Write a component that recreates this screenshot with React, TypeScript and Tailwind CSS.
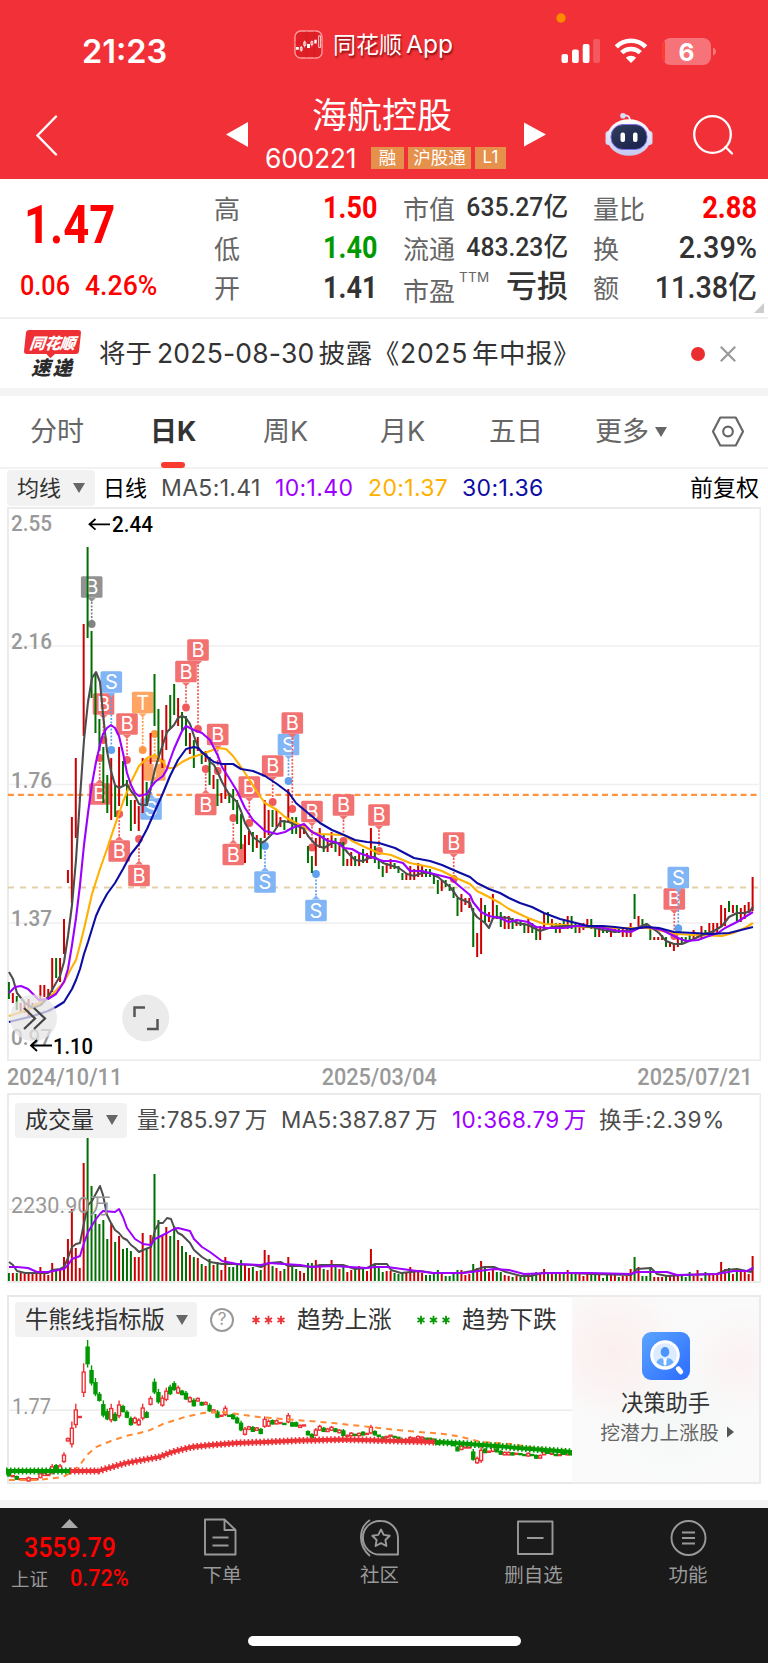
import React from 'react';

type Point = 'B' | 'S' | 'T' | 'N';

// one entry per trading day: direction + high/low position
const daily = `G982-999 R993-1003 G996-1010 R1003-1013 R1003-1013 R999-1016 R1003-1009 R1003-1007 R985-1005 R985-997
R989-997 R958-992 G958-978 R958-982 R919-954 R870-883 R817-903 R758-838 R797-799 R624-736
G547-638 G631-698 G673-733 G719-751 G747-803 G775-813 R758-820 G785-817 R747-806 G761-787
G780-806 G800-831 R800-824 R806-831 R758-813 G782-806 R733-764 G674-726 G709-758 R730-768
R705-750 G695-729 G684-715 R698-726 G712-730 G716-746 R733-754 G740-768 R737-751 G751-764
R751-762 G757-785 R775-789 G779-806 R793-803 R764-799 G793-803 G789-810 G800-824 G814-849
R835-863 R831-845 G832-852 R835-848 G838-859 R800-838 R810-835 G810-827 R810-827 R817-827
G820-830 R789-823 G817-834 G817-834 R827-838 R825-834 G846-863 G856-873 R838-866 R828-848
G835-852 R838-852 R832-848 G838-852 R842-856 G842-866 R859-866 R852-866 G856-866 R853-866
G849-863 R853-863 R828-859 G846-863 G859-869 G866-877 R863-873 R859-869 G863-869 G866-873
G873-880 R873-880 R866-880 R869-880 R863-877 R866-877 G869-877 G869-877 G873-884 G880-894
R880-891 G880-887 G884-891 G887-898 G898-916 R894-912 R898-905 R898-908 G908-947 R933-957
R898-954 G905-922 R912-922 R894-919 G905-919 G912-927 R916-929 R916-929 G918-929 R919-926
G920-926 G923-933 R919-933 G923-933 G926-940 R926-940 R913-929 G912-924 R919-927 G923-933
R923-933 G919-929 R916-929 G916-929 G923-933 R923-933 R923-930 R919-927 G919-929 G926-937
R926-937 G927-933 G927-933 R927-937 R927-933 G927-933 R928-937 R928-937 R923-937 G894-919
R916-926 G919-927 G923-927 G927-940 R937-940 R937-940 R935-940 G937-947 R943-947 R943-951
R937-947 G937-943 G937-943 G935-942 R930-940 R933-938 R926-939 G930-935 R923-935 R923-933
R923-933 R905-927 R908-926 G901-912 R905-913 G905-922 R908-922 R905-919 R902-913 R877-911`
  .split(/\s+/)
  .map((d) => {
    const [high, low] = d.slice(1).split('-').map(Number);
    return { up: d[0] === 'R', high, low };
  });

const volumes = [
  8, 8, 8, 8, 7, 8, 8, 7, 14, 9, 6, 18, 11, 12, 24, 42, 72, 33, 13, 118, 143, 95, 67, 57, 61, 42, 58, 39, 45, 32,
  33, 30, 24, 24, 48, 33, 46, 107, 61, 45, 54, 45, 55, 41, 35, 29, 26, 24, 23, 17, 15, 22, 16, 19, 11, 24, 14, 14,
  17, 21, 17, 13, 14, 10, 11, 31, 26, 15, 13, 10, 12, 24, 15, 12, 10, 8, 18, 18, 21, 14, 12, 11, 21, 14, 12, 15, 9,
  11, 12, 15, 12, 10, 32, 17, 14, 9, 10, 10, 8, 7, 9, 9, 14, 11, 11, 8, 6, 6, 9, 11, 9, 5, 5, 7, 11, 11, 6, 7, 17,
  13, 20, 13, 9, 12, 9, 9, 6, 5, 4, 5, 4, 5, 7, 7, 9, 7, 12, 9, 7, 8, 7, 8, 11, 8, 8, 8, 5, 7, 8, 7, 8, 3, 6, 6, 7,
  4, 5, 5, 12, 24, 14, 5, 5, 14, 4, 4, 4, 6, 5, 5, 7, 7, 4, 9, 5, 11, 3, 9, 6, 6, 6, 19, 12, 13, 7, 13, 10, 10, 7, 25,
];

const averages = [
  {
    color: '#ffb000',
    points:
      '9,1016 25,1011 41,1002 52,995 64,982 72,967 76,960 80,945 84,929 92,894 100,869 107,849 115,825 123,802 131,782 139,766 147,758 155,755 163,762 167,768 174,768 182,762 190,758 202,754 210,751 218,748 226,749 233,756 241,767 249,779 257,792 265,803 277,810 285,817 296,823 304,827 312,832 320,834 344,835 352,841 367,848 379,853 391,855 410,863 430,867 442,871 454,877 470,884 477,891 489,897 500,903 509,909 528,918 544,924 564,925 584,927 607,928 631,928 647,928 662,931 678,934 694,935 722,936 733,933 745,928 753,923',
  },
  {
    color: '#4d4d4d',
    points:
      '9,972 13,979 17,993 25,1003 33,1008 41,1005 48,997 56,983 60,976 64,962 68,936 72,905 76,860 80,798 84,740 88,702 92,678 96,672 100,682 103,714 107,751 111,771 115,785 119,788 123,786 127,784 131,791 135,796 139,804 143,805 147,805 151,787 155,769 159,756 163,744 167,732 174,725 178,718 182,716 186,718 190,724 194,736 198,747 202,753 206,754 210,762 214,765 218,773 222,782 226,789 229,794 237,802 241,811 245,823 253,837 261,843 265,841 273,833 281,821 289,822 304,829 308,836 316,845 324,848 332,843 340,843 348,853 355,860 363,861 371,857 375,857 383,863 399,868 407,874 414,876 422,873 430,873 438,877 450,887 454,892 458,898 470,903 473,912 477,917 485,923 489,928 493,918 497,917 509,918 517,923 528,925 540,931 552,927 564,926 576,926 592,927 603,930 615,932 623,931 631,931 639,927 647,924 651,927 659,933 666,941 674,944 682,944 694,939 702,935 714,931 722,926 729,917 737,913 745,913 750,911 753,907',
  },
  {
    color: '#9d00ff',
    points:
      '9,993 15,987 21,986 28,989 33,994 39,1000 48,999 56,994 64,982 68,969 72,945 76,918 80,885 84,845 88,813 92,784 96,762 100,745 103,734 107,728 111,725 115,728 119,736 123,753 127,773 131,785 135,793 139,796 147,794 151,787 155,782 163,776 167,769 170,760 174,749 178,740 182,731 186,726 194,730 202,733 210,740 218,756 222,767 229,778 237,791 245,808 253,820 265,831 277,834 285,832 292,828 304,824 312,832 320,836 328,841 336,842 344,848 352,849 359,853 371,857 383,861 395,861 403,863 410,871 422,871 434,874 450,878 458,885 470,895 473,902 481,912 489,916 500,918 509,922 517,920 528,922 536,927 548,928 564,928 576,926 592,926 603,928 619,931 631,932 639,928 647,927 662,930 670,934 678,938 686,941 698,940 706,937 718,933 725,928 737,922 745,917 753,912',
  },
  {
    color: '#0d0da3',
    points:
      '9,1022 33,1016 48,1011 56,1007 64,1002 72,989 76,980 80,969 84,954 88,942 96,916 100,907 107,894 115,883 123,869 131,854 139,844 147,829 155,811 163,793 170,776 178,760 186,749 194,747 198,748 206,756 214,762 222,764 233,764 241,769 253,771 265,776 277,784 289,793 296,803 308,813 320,823 332,830 344,835 355,840 367,842 379,843 395,848 414,858 430,861 442,865 458,872 470,877 477,883 489,889 500,893 509,898 520,903 532,907 544,913 560,919 576,923 588,926 603,926 615,927 631,929 647,927 659,928 674,932 694,933 710,934 729,933 745,929 753,927',
  },
];

const volumeAverages = [
  {
    color: '#4d4d4d',
    points:
      '9,1262 13,1265 17,1271 25,1273 37,1273 48,1273 52,1270 60,1269 64,1267 68,1258 72,1247 76,1244 80,1243 84,1223 88,1205 92,1201 100,1186 103,1195 107,1215 111,1223 115,1230 119,1233 123,1238 127,1240 131,1245 135,1248 139,1252 143,1250 151,1247 155,1230 159,1223 163,1223 167,1218 171,1219 174,1227 178,1233 182,1235 190,1243 194,1250 202,1257 210,1262 222,1264 233,1264 253,1265 261,1267 269,1263 281,1262 288,1266 300,1266 312,1267 320,1265 343,1265 355,1269 367,1268 375,1264 387,1264 391,1270 401,1273 421,1271 432,1273 461,1273 472,1271 484,1267 494,1267 506,1272 521,1276 531,1276 542,1273 571,1273 591,1274 631,1275 637,1269 651,1268 657,1274 667,1276 684,1275 717,1274 726,1270 737,1269 751,1272 753,1267',
  },
  {
    color: '#9d00ff',
    points:
      '9,1267 17,1267 28,1268 37,1272 48,1272 64,1269 68,1265 72,1259 80,1256 84,1243 88,1232 96,1219 100,1214 103,1211 115,1212 119,1209 123,1217 127,1228 135,1239 143,1244 151,1245 155,1239 167,1233 174,1229 178,1228 190,1231 194,1239 202,1247 210,1252 222,1261 237,1264 261,1265 269,1263 283,1264 300,1265 312,1267 333,1266 367,1268 375,1267 387,1267 417,1271 434,1273 464,1273 494,1269 509,1270 524,1274 551,1273 591,1273 631,1274 637,1272 667,1272 677,1275 717,1274 734,1271 747,1271 753,1268',
  },
];

const markColors = { B: '#f26d6d', S: '#7db3f5', T: '#ffa25c', N: '#8f8f8f' };
const dotColors = { B: '#f05555', S: '#5c9ff0', T: '#ff9440', N: '#808080' };

// kind, x, label y, dot y
const marks: [Point, number, number, number][] = [
  ['N', 91.7, 587, 624],
  ['B', 103.5, 704, 740],
  ['S', 111.3, 682, 750],
  ['B', 99.7, 794, 758],
  ['B', 127, 724, 760],
  ['T', 142.7, 702.5, 750],
  ['S', 151, 809, 772],
  ['T', 154.7, 770, 734],
  ['B', 119.2, 851, 814],
  ['B', 139, 875.5, 839],
  ['B', 186, 671.5, 707.5],
  ['B', 198, 650, 729],
  ['B', 217.7, 734.5, 771],
  ['B', 205.7, 804.5, 769],
  ['B', 233.3, 854.5, 818],
  ['B', 249.3, 787, 823],
  ['S', 265, 882, 846],
  ['B', 272.7, 766, 802],
  ['S', 288.5, 744.5, 781],
  ['B', 292.3, 723, 809],
  ['B', 312, 811.5, 847.5],
  ['S', 316, 910.5, 874],
  ['B', 343.5, 805, 841],
  ['B', 379, 815, 851],
  ['B', 453.7, 843, 879],
  ['B', 674.3, 899, 936],
  ['S', 678.3, 877.5, 928.5],
];

const barX = (i: number) => 8.9 + i * 3.935;

const cjk = "font-['Noto_Sans_CJK_SC',sans-serif]";
const latin = "font-['Inter','Noto_Sans_CJK_SC',sans-serif]";
const digits = "font-['Roboto','Noto_Sans_CJK_SC',sans-serif]";

function Caret({ className = '' }: { className?: string }) {
  return (
    <svg viewBox="0 0 12 10" className={`h-[10px] w-[12px] shrink-0 fill-[#666] ${className}`}>
      <path d="M0 0h12L6 10z" />
    </svg>
  );
}

function StatusBar() {
  return (
    <div className="flex h-[92px] items-start">
      <div className={`ml-[82px] mt-[32px] w-[212px] text-[32.500px] leading-[40px] font-semibold ${latin}`}>21:23</div>
      <svg viewBox="0 0 30 30" className="mt-[30px] size-[29px]">
        <rect x="1" y="1" width="28" height="28" rx="6" fill="#e01f26" stroke="#ff9a9c" strokeWidth="1.4" />
        <path d="M1 13h28M13 1v28M21 1v28" stroke="#c91a20" strokeWidth=".5" />
        <path d="M2 17.500h3v3H2zM13.500 14.500h3v4h-3zM21 10h2.500v4H21z" fill="#fff" />
        <path d="M6.500 18h2v3h-2zM10 12.500h2.200v3.500H10zM17.500 12h2v3h-2zM25.500 6h2v12h-2zM7.500 16.500v6M11 11v7M18.500 11v6" fill="none" stroke="#fff" strokeWidth=".8" />
      </svg>
      <div className={`ml-[10px] mt-[27px] w-[216px] text-[23px] leading-[36px] whitespace-nowrap [text-shadow:1px_2px_2px_rgba(90,0,0,.7)] ${latin}`}>
        同花顺<span className="ml-[4px] text-[24.500px] leading-[30px]">App</span>
      </div>
      <svg viewBox="548 8 180 64" className="h-[64px] w-[180px] mt-[8px] -ml-[1px]">
        <circle cx="561" cy="18" r="4.700" fill="#ff8a00" />
        <g fill="#fff">
          <rect x="561.500" y="54" width="6.500" height="9" rx="2" />
          <rect x="572" y="49.500" width="6.800" height="13.500" rx="2" />
          <rect x="582.700" y="44" width="6.800" height="19" rx="2" />
          <rect x="593.200" y="39" width="6.800" height="24" rx="2" opacity=".2" />
          <path d="M631 63l-5.200-5.200a7.600 7.600 0 0 1 10.400 0z" />
        </g>
        <g fill="none" stroke="#fff" strokeWidth="4.600">
          <path d="M616.300 46.800a21 21 0 0 1 29.400 0" />
          <path d="M621.700 52.700a13.500 13.500 0 0 1 18.600 0" />
        </g>
        <rect x="662.500" y="38" width="48.500" height="27" rx="8" fill="#fff" opacity=".33" />
        <path d="M665 40.500v22a8 8 0 0 1-2.800-6v-10a8 8 0 0 1 2.800-6z" fill="#ff3b30" />
        <path d="M713 47.500c4 1.500 4 6.500 0 8z" fill="#fff" opacity=".35" />
        <text x="686.500" y="60.500" textAnchor="middle" fill="#fff" className="font-['Inter',sans-serif] text-[24.500px] font-bold">
          6
        </text>
      </svg>
    </div>
  );
}

function TitleBar() {
  return (
    <div className="flex h-[87px] items-start">
      <svg viewBox="0 0 24 42" className="ml-[35px] mt-[22px] h-[42px] w-[24px]" fill="none" stroke="#fff" strokeWidth="2.400" strokeLinecap="round">
        <path d="M21 2.500 2.500 21.500 21 40.500" />
      </svg>
      <svg viewBox="0 0 22 25" className="ml-[167px] mt-[30px] h-[25px] w-[22px] fill-white">
        <path d="M22 0v25L0 12.500z" />
      </svg>
      <div className="ml-[17px] w-[241px]">
        <div className={`-mt-[3px] h-[51px] pl-[47px] text-[35px] leading-[48px] ${cjk}`}>海航控股</div>
        <div className="flex h-[36px] items-center">
          <span className={`w-[106px] text-[26.500px] leading-[34px] tracking-[-.3px] ${latin}`}>600221</span>
          <div className={`flex gap-[4px] text-[17.500px] leading-[20px] ${cjk}`}>
            <span className="h-[22px] w-[33px] bg-[#e5904b] text-center">融</span>
            <span className="h-[22px] w-[63px] bg-[#e5904b] text-center">沪股通</span>
            <span className={`h-[22px] w-[31px] bg-[#e5904b] text-center text-[17px] leading-[21px] ${latin}`}>L1</span>
          </div>
        </div>
      </div>
      <svg viewBox="0 0 23 25" className="ml-[18px] mt-[30px] h-[25px] w-[22px] fill-white">
        <path d="M0 0v25l23-12.500z" />
      </svg>
      <svg viewBox="0 0 48 44" className="ml-[59px] mt-[20px] h-[44px] w-[48px]">
        <defs>
          <linearGradient id="shell" x1="0" y1="0" x2="0" y2="1">
            <stop offset="0" stopColor="#fff" />
            <stop offset="1" stopColor="#c3c8ee" />
          </linearGradient>
          <linearGradient id="visor" x1="0" y1="0" x2="1" y2="1">
            <stop offset="0" stopColor="#333d5c" />
            <stop offset="1" stopColor="#16204a" />
          </linearGradient>
        </defs>
        <path d="M17 4c5-1.500 8 0 8 5" fill="none" stroke="#e4e6fa" strokeWidth="1.800" />
        <circle cx="18" cy="3.800" r="2.800" fill="#d9dcf5" />
        <rect x=".5" y="19" width="6" height="14" rx="3" fill="#d7daf5" />
        <rect x="41.500" y="19" width="6" height="14" rx="3" fill="#d7daf5" />
        <ellipse cx="24" cy="25.500" rx="22" ry="18.300" fill="url(#shell)" />
        <rect x="6" y="12.500" width="36" height="25" rx="12" fill="url(#visor)" stroke="#7b6cf0" strokeWidth="1" />
        <rect x="15.500" y="20.500" width="4.500" height="9.500" rx="2" fill="#fff" />
        <rect x="28" y="20.500" width="4.500" height="9.500" rx="2" fill="#fff" />
      </svg>
      <svg viewBox="0 0 42 42" className="ml-[40px] mt-[22px] size-[42px]" fill="none" stroke="#fff" strokeWidth="2.300" strokeLinecap="round">
        <circle cx="19.500" cy="20.500" r="18.300" />
        <path d="m32.500 33 6.500 6.500" />
      </svg>
    </div>
  );
}

function Quote() {
  return (
    <section className="relative flex h-[140px] border-b-2 border-[#f0f0f0]">
      <div className={`w-[214px] text-[#ff0000] ${digits}`}>
        <div className="mt-[12px] h-[68px] pl-[24px] text-[54px] leading-[68px] font-bold">
          <span className="inline-block origin-left scale-x-[.84]">1.47</span>
        </div>
        <div className="flex pt-[9px] pl-[20px] text-[28px] leading-[36px] font-medium">
          <span className="w-[65px] origin-left scale-x-[.9]">0.06</span>
          <span className="origin-left scale-x-[.95]">4.26%</span>
        </div>
      </div>
      <div className="flex w-[163px] justify-between pt-[9px]">
        <div className={`text-[26px] leading-[39.500px] text-[#666] ${cjk}`}>
          <p>高</p>
          <p>低</p>
          <p>开</p>
        </div>
        <div className={`origin-right scale-x-[.87] text-right text-[31px] leading-[40px] font-bold ${digits}`}>
          <p className="text-[#ff0000]">1.50</p>
          <p className="text-[#009900]">1.40</p>
          <p className="text-[#333]">1.41</p>
        </div>
      </div>
      <div className="ml-[26px] flex w-[165px] justify-between pt-[9px]">
        <div className={`text-[26px] leading-[39.500px] text-[#666] ${cjk}`}>
          <p>市值</p>
          <p>流通</p>
          <p className="flex">
            <span className="pt-[3px]">市盈</span>
            <sup className={`top-[-9px] h-[39px] pl-[4px] text-[13.500px] leading-[39px] tracking-[.3px] ${latin}`}>TTM</sup>
          </p>
        </div>
        <div className={`-ml-[40px] text-right text-[26px] leading-[39.500px] font-medium whitespace-nowrap text-[#333] ${digits}`}>
          <p className="origin-right scale-x-[.95]">635.27亿</p>
          <p className="origin-right scale-x-[.95]">483.23亿</p>
          <p className="text-[31px]">亏损</p>
        </div>
      </div>
      <div className="ml-[25px] flex w-[164px] justify-between pt-[9px]">
        <div className={`text-[26px] leading-[39.500px] text-[#666] ${cjk}`}>
          <p>量比</p>
          <p>换</p>
          <p>额</p>
        </div>
        <div className={`origin-right text-right text-[31px] leading-[40px] font-medium whitespace-nowrap text-[#333] ${digits}`}>
          <p className="origin-right scale-x-[.88] font-bold text-[#ff0000]">2.88</p>
          <p className="origin-right scale-x-[.93]">2.39%</p>
          <p className="origin-right scale-x-[.93]">11.38亿</p>
        </div>
      </div>
      <svg viewBox="0 0 10 10" className="absolute right-[4px] bottom-[4px] size-[10px] fill-[#ccc]">
        <path d="M10 0v10H0z" />
      </svg>
    </section>
  );
}

function Notice() {
  return (
    <section className="flex h-[69px] items-center">
      <div className={`ml-[24px] flex w-[57px] flex-col items-center italic ${cjk}`}>
        <div className="relative mt-[1px] h-[24px] w-[55px] -skew-x-6 rounded-[3px] bg-[#ee2f33] text-center text-[15.500px] leading-[24px] font-black tracking-[-.3px] text-white">
          同花顺
          <span className="absolute -bottom-[3px] left-[24px] size-[6px] rotate-45 bg-[#ee2f33]" />
        </div>
        <div className="mt-[1px] h-[24px] text-[19.500px] leading-[24px] font-black tracking-[2px] text-[#2b2b2b]">速递</div>
      </div>
      <p className={`ml-[18px] w-[592px] text-[26.500px] whitespace-nowrap text-[#333] ${latin}`}>
        将于<span className="mr-[4px] ml-[5px] tracking-[.2px]">2025-08-30</span>
        <span className="tracking-[.7px]">披露《2025</span>
        <span className="ml-[4px] tracking-[.5px]">年中报》</span>
      </p>
      <span className="size-[14px] rounded-full bg-[#ea2e30]" />
      <svg viewBox="0 0 16 16" className="ml-[15px] size-[16px]" stroke="#999" strokeWidth="2.200">
        <path d="M.8.8l14.400 14.400M15.200.8.8 15.200" />
      </svg>
    </section>
  );
}

function Tabs() {
  return (
    <nav className={`flex h-[73px] items-center border-b-2 border-[#f2f2f2] pt-[2px] text-[27px] text-[#666] ${latin}`}>
      <span className="ml-[30px] w-[120px]">分时</span>
      <span className="relative w-[113px] font-bold text-[#333]">
        日K
        <i className="absolute -bottom-[15px] left-[11px] h-[6px] w-[24px] rounded-[3px] bg-[#fc3b30]" />
      </span>
      <span className="w-[117px]">周K</span>
      <span className="w-[109px]">月K</span>
      <span className="w-[106px]">五日</span>
      <span className="w-[60px]">更多</span>
      <Caret className="-mt-[2px]" />
      <svg viewBox="0 0 34 32" className="-mt-[2px] ml-[44px] h-[31px] w-[34px]" fill="none" stroke="#666" strokeWidth="2.200" strokeLinejoin="round">
        <path d="M9 1.500h16L32.500 16 25 30.500H9L1.500 16z" />
        <circle cx="17" cy="16" r="5" />
      </svg>
    </nav>
  );
}

function AverageRow() {
  return (
    <div className={`flex h-[38px] items-center pl-[7px] text-[22px] whitespace-nowrap ${latin}`}>
      <div className="flex h-[36px] w-[88px] items-center rounded-[4px] bg-[#f2f2f2] pl-[10px] text-[#333]">
        均线 <Caret className="ml-[12px]" />
      </div>
      <span className="ml-[8px] w-[58px] text-black">日线</span>
      <span className="w-[114px] text-[23px] tracking-[.35px] text-[#4d4d4d]">MA5:1.41</span>
      <span className="w-[93px] text-[23px] tracking-[.35px] text-[#9d00ff]">10:1.40</span>
      <span className="w-[94px] text-[23px] tracking-[.35px] text-[#ffb000]">20:1.37</span>
      <span className="w-[228px] text-[23px] tracking-[.35px] text-[#0d0da3]">30:1.36</span>
      <span className="text-[23px] text-black">前复权</span>
    </div>
  );
}

function Mark({ kind, x, y, dot }: { kind: Point; x: number; y: number; dot: number }) {
  const below = y > dot;
  const edge = below ? y - 11 : y + 11;
  const tip = below ? edge - 4 : edge + 4;
  return (
    <g opacity=".97">
      <rect x={x - 10.800} y={y - 10.800} width="21.600" height="21.600" rx="1.500" fill={markColors[kind]} />
      <path d={`M${x - 4} ${edge}L${x} ${tip}L${x + 4} ${edge}z`} fill={markColors[kind]} />
      <path d={`M${x} ${tip}V${dot}`} stroke={dotColors[kind]} strokeWidth="1.700" strokeDasharray="2 1.500" />
      <circle cx={x} cy={dot} r="3.900" fill={dotColors[kind]} />
      <text x={x} y={y + 7} textAnchor="middle" fill="#fff" className="font-['Inter',sans-serif] text-[20px]">
        {kind === 'N' ? 'B' : kind}
      </text>
    </g>
  );
}

function PriceChart() {
  return (
    <div className="mx-[7px] h-[554px]">
      <svg viewBox="7 507 754 554" className="h-[554px] w-[754px]">
        <rect x="8" y="508" width="752.500" height="552.500" fill="#fff" stroke="#ebebeb" strokeWidth="2" />
        <path d="M9 646h750M9 784.500h750M9 923h750" stroke="#f0f0f0" strokeWidth="1.500" />
        <path d="M8 794.800h752" stroke="#ff9440" strokeWidth="2.200" strokeDasharray="6 3.900" />
        <path d="M8 887.500h752" stroke="#e6cfa8" strokeWidth="1.800" strokeDasharray="6 6" />

        <g fill="#999" className="font-['Roboto',sans-serif] text-[22px] font-medium">
          {[['2.55', 530.5], ['2.16', 649], ['1.76', 787.5], ['1.37', 926]].map(([label, y]) => (
            <text key={label} x="11" y={y} textLength="41" lengthAdjust="spacingAndGlyphs">{label}</text>
          ))}
          <text x="11" y="1045" textLength="41" lengthAdjust="spacingAndGlyphs">0.97</text>
        </g>

        {marks.map(([kind, x, y, dot], i) => (
          <Mark key={i} kind={kind} x={x} y={y} dot={dot} />
        ))}

        {daily.map((d, i) => (
          <path key={i} d={`M${barX(i)} ${d.high}V${d.low}`} stroke={d.up ? '#cc0000' : '#006e00'} strokeWidth="2" />
        ))}
        {averages.map((line) => (
          <polyline key={line.color} points={line.points} fill="none" stroke={line.color} strokeWidth="2.100" strokeLinejoin="round" />
        ))}

        <g className="font-['Roboto',sans-serif] text-[22px] font-medium">
          <path d="M110 524.300H89.500M95.500 519l-6 5.300 6 5.300" fill="none" stroke="#000" strokeWidth="1.800" />
          <text x="112" y="532" textLength="41" lengthAdjust="spacingAndGlyphs">2.44</text>
        </g>

        {/* floating controls */}
        <circle cx="33.500" cy="1018" r="23.500" fill="#e6e6e6" opacity=".75" />
        <path d="m24 1008 11 10.500-11 10.500M34 1008l11 10.500-11 10.500" fill="none" stroke="#444" strokeWidth="2.200" />
        <circle cx="145.700" cy="1018" r="23.500" fill="#ebebeb" />
        <path d="M134.500 1017v-9.500H145M157.500 1019v10H147" fill="none" stroke="#555" strokeWidth="2.500" />
        <g className="font-['Roboto',sans-serif] text-[22px] font-medium">
          <path d="M52 1045.500H31M37 1040l-6 5.500 6 5.500" fill="none" stroke="#000" strokeWidth="1.800" />
          <text x="53" y="1053.500" textLength="40" lengthAdjust="spacingAndGlyphs">1.10</text>
        </g>
      </svg>
    </div>
  );
}

function DateAxis() {
  return (
    <div className={`flex h-[32px] items-center justify-between pr-[15px] pl-[7px] text-[23px] leading-[31px] font-medium text-[#999] ${digits}`}>
      <span className="origin-left scale-x-[.94]">2024/10/11</span>
      <span className="-ml-[2px] scale-x-[.94]">2025/03/04</span>
      <span className="origin-right scale-x-[.94]">2025/07/21</span>
    </div>
  );
}

function VolumePanel() {
  return (
    <section className="relative mx-[7px] h-[190px]">
      <svg viewBox="7 1093 754 190" className="absolute inset-0 h-[190px] w-[754px]">
        <rect x="8" y="1094" width="752.500" height="188" fill="#fff" stroke="#ebebeb" strokeWidth="2" />
        <path d="M9 1209.300h750" stroke="#ebebeb" strokeWidth="1.500" />
        {volumes.map((v, i) => (
          <path key={i} d={`M${barX(i)} 1281V${1281 - v}`} stroke={daily[i].up ? '#cc0000' : '#006e00'} strokeWidth="2" />
        ))}
        {volumeAverages.map((line) => (
          <polyline key={line.color} points={line.points} fill="none" stroke={line.color} strokeWidth="2" strokeLinejoin="round" />
        ))}
        <text x="11" y="1212.500" fill="#999" textLength="100" lengthAdjust="spacingAndGlyphs" className="font-['Roboto','Noto_Sans_CJK_SC',sans-serif] text-[22px]">
          2230.90万
        </text>
      </svg>
      <div className={`relative flex h-[52px] items-center pt-[2px] pl-[8px] text-[22.500px] whitespace-nowrap text-[#4d4d4d] ${latin}`}>
        <div className="flex h-[35px] w-[112px] items-center rounded-[4px] bg-[#f2f2f2] pl-[10px] text-[23px] text-[#333]">
          成交量 <Caret className="ml-[12px]" />
        </div>
        <span className="ml-[10px] w-[144px] tracking-[.35px]">量:785.97<span className="ml-[4px]">万</span></span>
        <span className="w-[171px] tracking-[.35px]">MA5:387.87<span className="ml-[4px]">万</span></span>
        <span className="w-[147px] tracking-[.45px] text-[#9d00ff]">10:368.79<span className="ml-[4px]">万</span></span>
        <span className="tracking-[.6px]">换手:2.39%</span>
      </div>
    </section>
  );
}

const trend = {
  start: 'M6 1471H70',
  rise: 'M70 1471H98L105 1469L126 1463L148 1459L159 1457L172 1452L192 1447L211 1445L237 1443L266 1442L300 1440.500L344 1439.500L400 1441L435 1442',
  fall: 'M435 1442L462 1443.500L496 1446L525 1448.500L572 1452',
};

function TrendStars({ d, color }: { d: string; color: string }) {
  return (
    <g fill="none" stroke={color}>
      <path d={d} strokeWidth="3.800" />
      <path d={d} strokeWidth="7" strokeDasharray="1.600 2.335" />
    </g>
  );
}

function IndicatorPanel() {
  // same days as the price chart, squeezed into this panel's range
  const scale = (y: number) => 1340 + (y - 547) * 0.302;
  return (
    <section className="relative mx-[7px] mt-[12px] flex h-[189px]">
      <svg viewBox="6 1295 566 189" className="absolute top-0 -left-[1px] h-[189px] w-[566px]">
        <path d="M572 1296H8V1483H572" fill="#fff" stroke="#e8e8e8" strokeWidth="2" />
        <path d="M9 1410.300H572" stroke="#ebebeb" strokeWidth="1.500" />
        <text x="12" y="1414" fill="#999" textLength="39" lengthAdjust="spacingAndGlyphs" className="font-['Roboto',sans-serif] text-[22px]">
          1.77
        </text>
        {daily.slice(0, 144).map((d, i) => {
          const top = scale(d.high);
          const h = Math.max(scale(d.low) - top, 1.5);
          const color = d.up ? '#ec3237' : '#009900';
          const flat = h < 3.2;
          return (
            <g key={i} stroke={color} strokeWidth="1.400">
              {!flat && <path d={`M${barX(i)} ${top}v${h}`} />}
              <rect
                x={barX(i) - 1.500}
                y={flat ? top + 1 : top + h * 0.26}
                width="3"
                height={flat ? 1 : h * 0.6}
                fill={d.up && !flat ? '#fff' : color}
              />
            </g>
          );
        })}
        <polyline
          points="9,1480 37,1480 63,1477 72,1472 80,1465 87,1455 96,1447 111,1441 126,1436 148,1431 163,1424 185,1417 203,1413 222,1412 237,1414 259,1417 296,1420 333,1423 370,1427 407,1431 444,1434 462,1437 481,1442 511,1444 536,1448 572,1451"
          fill="none"
          stroke="#ff8a33"
          strokeWidth="2"
          strokeDasharray="6 5"
        />
        <TrendStars d={trend.start} color="#009900" />
        <TrendStars d={trend.rise} color="#ec3237" />
        <TrendStars d={trend.fall} color="#009900" />
      </svg>
      <div className={`relative flex h-[49px] w-[565px] items-center pl-[8px] text-[23.300px] whitespace-nowrap text-[#333] ${cjk}`}>
        <div className="flex h-[35px] w-[182px] items-center rounded-[4px] bg-[#f2f2f2] pl-[10px]">
          <span className="-mt-[2px]">牛熊线指标版</span> <Caret className="ml-[11px]" />
        </div>
        <span className={`ml-[13px] flex size-[24px] items-center justify-center rounded-full border-2 border-[#999] text-[17px] text-[#999] ${latin}`}>?</span>
        <Stars className="ml-[18px] text-[#ec3237]" />
        <span className="-mt-[2px] ml-[12px] w-[94px] text-[23.700px]">趋势上涨</span>
        <Stars className="ml-[26px] text-[#009900]" />
        <span className="-mt-[2px] ml-[12px] text-[23.700px]">趋势下跌</span>
      </div>
      <div className={`relative flex flex-1 flex-col items-center border-y-2 border-r-2 border-[#ebebeb] bg-[radial-gradient(circle_at_22%_30%,#fceeee_0,transparent_38%),radial-gradient(circle_at_90%_35%,#fbf2f2_0,transparent_28%),radial-gradient(circle_at_55%_62%,#f4f8f7_0,transparent_50%)] bg-[#fafafa] ${cjk}`}>
        <svg viewBox="0 0 48 48" className="mt-[35px] size-[48px]">
          <defs>
            <linearGradient id="finder" x1="0" y1="0" x2="1" y2="1">
              <stop offset="0" stopColor="#5aa5ff" />
              <stop offset="1" stopColor="#2c6bff" />
            </linearGradient>
          </defs>
          <rect width="48" height="48" rx="9" fill="url(#finder)" />
          <circle cx="23" cy="23" r="14.800" fill="#fff" />
          <circle cx="23" cy="23" r="11.800" fill="#dcebff" />
          <ellipse cx="23" cy="20" rx="4.300" ry="5" fill="#4a94fb" />
          <path d="M14.500 30.500c1-3 3.500-4.500 6-4.300L23 33l2.500-6.800c2.500-.2 5 1.300 6 4.300a11.800 11.800 0 0 1-17 0z" fill="#6cb0fd" />
          <path d="m22.300 26.500-.9 5.500L23 34l1.600-2-.9-5.500z" fill="#fff" />
          <path d="m36.300 36.800 2.400 3" stroke="#fff" strokeWidth="5" strokeLinecap="round" />
        </svg>
        <p className="mt-[5px] text-[22.300px] leading-[32px] text-[#333]">决策助手</p>
        <p className="flex items-center pl-[3px] text-[19.800px] leading-[29px] text-[#666]">
          挖潜力上涨股
          <svg viewBox="0 0 7 11" className="ml-[8px] h-[12px] w-[7px] fill-[#555]">
            <path d="M0 0l7 5.500L0 11z" />
          </svg>
        </p>
      </div>
    </section>
  );
}

function Stars({ className }: { className: string }) {
  return (
    <svg viewBox="0 0 33 10" className={`h-[10px] w-[33px] ${className}`} stroke="currentColor" strokeWidth="1.800">
      {[4, 16.5, 29].map((x) => (
        <path key={x} d={`M${x} .8v8.400M${x - 3.5} 3l7 4M${x - 3.5} 7l7-4`} />
      ))}
    </svg>
  );
}

function BottomBar() {
  return (
    <footer className="h-[155px] bg-[#1a1a1a]">
      <div className={`flex h-[128px] text-[19.500px] text-[#999] ${cjk}`}>
        <div className="w-[144px]">
          <svg viewBox="0 0 17 9" className="mt-[11px] ml-[61px] h-[9px] w-[17px] fill-[#aaa]">
            <path d="M8.500 0 17 9H0z" />
          </svg>
          <p className={`mt-[4px] ml-[24px] h-[31px] origin-left scale-x-[.89] text-[28px] leading-[32px] whitespace-nowrap text-[#ff0000] font-medium ${digits}`}>
            3559.79
          </p>
          <div className="mt-[1px] flex h-[28px] items-center pl-[11px] text-[18.500px] leading-[28px]">
            <span className="w-[59px]">上证</span>
            <span className={`origin-left scale-x-[.92] text-[23.500px] font-medium text-[#ff0000] ${digits}`}>0.72%</span>
          </div>
        </div>
        <NavItem label="下单" className="w-[156px]">
          <path d="M3 1.500h19.500L33.500 12v24.500H3zM22.500 1.500V12h11M10.500 19.500h16M10.500 27.500h16" />
        </NavItem>
        <NavItem label="社区" className="w-[159px]">
          <path d="M21 3a16.800 16.800 0 1 0 0 33.500h17V20A17 17 0 0 0 21 3zM10 2C-1 9-3 27 10 38" />
          <path d="m21 11.500 2.700 5.400 6 .9-4.300 4.200 1 6-5.400-2.800-5.400 2.800 1-6-4.300-4.200 6-.9z" />
        </NavItem>
        <NavItem label="删自选" className="w-[149px]">
          <path d="M4 3.500h34.500v32.500H4zM13 20h16.500" />
        </NavItem>
        <NavItem label="功能" className="w-[160px]">
          <circle cx="20.500" cy="20" r="17" />
          <path d="M14 14.500h13M14 20h13M14 25.500h13" />
        </NavItem>
      </div>
      <div className="mx-auto h-[10px] w-[273px] rounded-full bg-white" />
    </footer>
  );
}

function NavItem({ label, className, children }: { label: string; className: string; children: React.ReactNode }) {
  return (
    <div className={`flex flex-col items-center ${className}`}>
      <svg viewBox="0 0 40 40" className="mt-[10px] size-[40px] overflow-visible" fill="none" stroke="#999" strokeWidth="1.900" strokeLinejoin="round">
        {children}
      </svg>
      <span className="mt-[1px] leading-[30px]">{label}</span>
    </div>
  );
}

export default function App() {
  return (
    <main className="h-[1663px] w-[768px] overflow-hidden bg-white">
      <header className="h-[179px] bg-[#f23038] text-white">
        <StatusBar />
        <TitleBar />
      </header>
      <Quote />
      <Notice />
      <div className="h-[8px] bg-[#f4f4f4]" />
      <Tabs />
      <AverageRow />
      <PriceChart />
      <DateAxis />
      <VolumePanel />
      <IndicatorPanel />
      <div className="mt-[16px] h-[8px] bg-[#f4f4f4]" />
      <BottomBar />
    </main>
  );
}
